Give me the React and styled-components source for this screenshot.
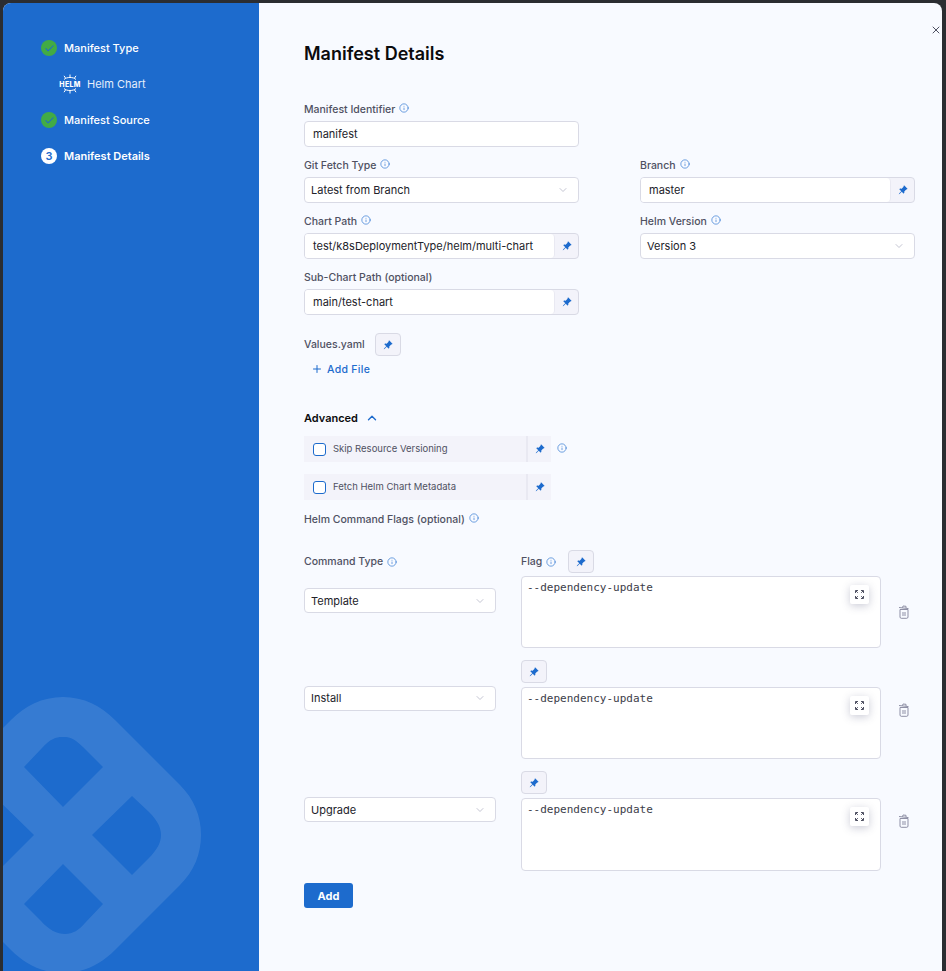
import React from "react";
import styled, { createGlobalStyle } from "styled-components";
import { BsPinAngleFill } from "react-icons/bs";
import { ChevronDown, ChevronUp, Info, Plus, X, Check } from "lucide-react";

const Global = createGlobalStyle`
  html, body { margin: 0; padding: 0; background: #2b2d31; }
  body { font-family: Inter, "Noto Sans", sans-serif; }
  * { box-sizing: border-box; }
`;
const Page = styled.div`
  width: 946px; height: 971px; padding: 3px 4px 0 3px; overflow: hidden;
`;
const Modal = styled.div`
  display: flex; height: 968px; background: #f8faff; border-radius: 8px 8px 0 0; overflow: hidden;
`;
const Sidebar = styled.aside`
  position: relative; width: 256px; flex: none; background: #1d6bcd; padding: 36px 0 0 38px; overflow: hidden;
`;
const Step = styled.div`
  display: flex; align-items: center; gap: 7px; height: 18px; margin-bottom: 18px;
  color: #fff; font-size: 11px; font-weight: ${p => p.$bold ? 600 : 500};
`;
const SubStep = styled(Step)`
  padding-left: 18px; gap: 6px; color: #e6eefb; font-weight: 400;
`;
const Done = styled.span`
  width: 16px; height: 16px; border-radius: 50%; background: #42ab45; color: #1d6bcd;
  display: flex; align-items: center; justify-content: center;
`;
const Num = styled(Done)`
  background: #fff; color: #1d6bcd; font-size: 11px; font-weight: 600;
`;
const Watermark = styled.svg`
  position: absolute; left: -3px; top: 667px; width: 259px; height: 301px;
`;
const Main = styled.main`
  position: relative; flex: 1; padding: 39px 27px 0 45px;
`;
const Close = styled.button`
  position: absolute; top: 21px; right: 25px; padding: 0; border: 0; background: none; color: #4f5162; display: flex;
`;
const Title = styled.h1`
  margin: 0 0 36px; font-size: 18px; line-height: 24px; font-weight: 600; color: #0b0b0d;
`;
const TwoCols = styled.div`
  display: grid; grid-template-columns: 275px 275px; column-gap: 61px;
`;
const Col = styled.div`display: flex; flex-direction: column;`;
const Field = styled.div`
  display: flex; flex-direction: column; margin-bottom: ${p => p.$mb ?? 11}px;
`;
const Label = styled.label`
  display: flex; align-items: center; gap: 4px; height: 14px; margin-bottom: 5px;
  font-size: 10.5px; font-weight: 500; color: #4f5162;
  svg { color: #1d6bcd; position: relative; top: -1px; }
`;
const Control = styled.div`
  display: flex; align-items: center; height: 26px; background: #fff; border: 1px solid #d9dae5; border-radius: 4px;
  padding: 0 ${p => p.$select ? 9 : 8}px 0 ${p => p.$select ? 6 : 8}px; justify-content: space-between;
  font-size: 11px; color: #22222a; overflow: hidden;
  svg { color: #b0b1c3; }
`;
const Split = styled(Control)`
  padding: 0 0 0 8px; background: #f3f3fa;
`;
const SplitValue = styled.span`
  flex: 1; align-self: stretch; display: flex; align-items: center; background: #fff; margin-left: -8px; padding-left: 8px;
  border-right: 1px solid #e9e9f2; border-radius: 0 4px 4px 0;
`;
const PinSlot = styled.span`
  width: 23px; flex: none; display: flex; align-items: center; justify-content: center; color: #1d6bcd;
  svg { color: #1d6bcd; }
`;
const PinButton = styled.button`
  width: 26px; height: 23px; padding: 0; border: 1px solid #d9dae5; border-radius: 4px; background: #f3f3fa;
  display: flex; align-items: center; justify-content: center; color: #1d6bcd; flex: none;
`;
const ValuesRow = styled.div`
  display: flex; align-items: center; gap: 10px; font-size: 10.5px; font-weight: 500; color: #4f5162; margin-top: 7px;
`;
const AddFile = styled.div`
  display: flex; align-items: center; gap: 4px; margin: 6px 0 0 7px; height: 14px;
  font-size: 10.5px; font-weight: 500; color: #1d6bcd; letter-spacing: .3px;
`;
const Advanced = styled.div`
  display: flex; align-items: center; gap: 7px; margin: 34px 0 10px; height: 16px;
  font-size: 11px; font-weight: 600; color: #0b0b0d; svg { color: #1d6bcd; }
`;
const CheckLine = styled.div`
  display: flex; align-items: center; gap: 6px; margin-bottom: 12px;
`;
const CheckRow = styled.div`
  display: flex; align-items: center; width: 247px; height: 26px; background: #f3f3fa;
`;
const CheckMain = styled.div`
  flex: 1; align-self: stretch; display: flex; align-items: center; gap: 7px; padding: 0 0 2px 9px;
  font-size: 9.5px; color: #4f5162; border-right: 2px solid #e9e9f2;
`;
const Box = styled.span`
  width: 13px; height: 13px; border: 1px solid #1d6bcd; border-radius: 3px; background: #fff; flex: none; margin-top: 2px;
`;
const HelmLabel = styled(Label)`
  margin: 3px 0 24px; gap: 4px;
`;
const FlagHead = styled.div`
  display: grid; grid-template-columns: 192px 360px; column-gap: 25px; align-items: center;
`;
const FlagHeadCell = styled.div`
  display: flex; align-items: center; gap: 4px; font-size: 10.5px; font-weight: 500; color: #4f5162; height: 23px;
  svg { color: #1d6bcd; }
`;
const FlagRow = styled.div`
  display: grid; grid-template-columns: 192px 360px 34px; column-gap: 25px; margin-top: ${p => p.$first ? 3 : 12}px;
`;
const CmdSelect = styled(Control)`
  height: 25px; align-self: center; margin-top: ${p => p.$offset}px;
`;
const FlagCol = styled.div`display: flex; flex-direction: column;`;
const FlagPin = styled(PinButton)`margin-bottom: 4px;`;
const TextBox = styled.div`
  position: relative; height: ${p => p.$h}px; background: #fff; border: 1px solid #d9dae5; border-radius: 4px;
  padding: 4px 5px; font-family: "DejaVu Sans Mono", "Liberation Mono", monospace; font-size: 11px; line-height: 14px; color: #3c3d49;
`;
const Expand = styled.span`
  position: absolute; top: 8px; right: 11px; width: 19px; height: 19px; border-radius: 2px; background: #fff;
  box-shadow: 0 2px 8px rgba(70,72,110,.28); display: flex; align-items: center; justify-content: center; color: #4f5162;
`;
const Trash = styled.svg`
  align-self: center; margin-left: -8px; margin-top: ${p => p.$offset}px; color: #8f90a6;
`;
const AddButton = styled.button`
  margin-top: 12px; width: 49px; height: 25px; border: 0; border-radius: 3px; background: #1d6bcd; color: #fff;
  font: 700 11px Inter, sans-serif;
`;

const I = () => <Info size={10} strokeWidth={1.5} />;
const Pin = () => <BsPinAngleFill size={10} />;
const TrashIcon = ({ offset }) => (
  <Trash $offset={offset} width="12" height="14" viewBox="0 0 12 14" fill="none" stroke="currentColor" strokeWidth="1">
    <path d="M1 2.5 L10.5 3.6 M4.5 2.8 L5 1 L8 1.3 L8 3" />
    <path d="M2 4.5 V12 C2 12.8 2.5 13.3 3.2 13.3 H8.8 C9.5 13.3 10 12.8 10 12 V4.5 Z" />
    <path d="M5 7 V11 M7 7 V11" />
  </Trash>
);
const ExpandIcon = () => (
  <svg width="9" height="9" viewBox="0 0 9 9" fill="none" stroke="currentColor" strokeWidth="1">
    <path d="M.5 3V.5H3M6 .5h2.5V3M8.5 6v2.5H6M3 8.5H.5V6M.8.8l2 2M8.2.8l-2 2M8.2 8.2l-2-2M.8 8.2l2-2" />
  </svg>
);
const HelmIcon = () => (
  <svg width="22" height="20" viewBox="0 0 22 20" fill="none">
    <g stroke="#fff" strokeWidth="1">
      <path d="M5 5.5C7.5 2.8 14.5 2.8 17 5.5M5 14.5C7.5 17.2 14.5 17.2 17 14.5" />
      <path d="M11 3V.5M6.5 4L5 1.8M15.5 4L17 1.8M11 17v2.5M6.5 16L5 18.2M15.5 16L17 18.2" />
    </g>
    <text x="11" y="12.6" textAnchor="middle" fill="#fff" fontFamily="Inter, sans-serif" fontSize="7" fontWeight="800" letterSpacing=".3">HELM</text>
  </svg>
);
const Select = ({ children, as: C = Control, ...rest }) => (
  <C $select {...rest}>{children}<ChevronDown size={12} strokeWidth={1.5} /></C>
);
const Pinned = ({ children }) => (
  <Split><SplitValue>{children}</SplitValue><PinSlot><Pin /></PinSlot></Split>
);

const flags = [
  { name: "Template", h: 72, sel: -23, tr: 0 },
  { name: "Install", h: 72, sel: -23, tr: 0 },
  { name: "Upgrade", h: 73, sel: -23, tr: 0 },
];

export default function App() {
  return (
    <Page>
      <Global />
      <Modal>
        <Sidebar>
          <Step><Done><Check size={11} strokeWidth={2.2} /></Done>Manifest Type</Step>
          <SubStep><HelmIcon />Helm Chart</SubStep>
          <Step><Done><Check size={11} strokeWidth={2.2} /></Done>Manifest Source</Step>
          <Step $bold><Num>3</Num>Manifest Details</Step>
          <Watermark viewBox="0 0 259 301">
            <path fillRule="evenodd" fill="#fff" fillOpacity=".115" d="M63 27
              C84 27 101 36 115 50 L180 115 C194 129 201 146 201 165 C201 184 194 201 180 215 L115 280 C101 294 84 303 63 303
              C42 303 25 294 11 280 L-54 215 C-68 201 -75 184 -75 165 C-75 146 -68 129 -54 115 L11 50 C25 36 42 27 63 27 Z
              M24 97 L63 137 L103 97 L83 77 C72 66 67 67 62 67 C56 67 50 69 42 78 Z
              M132 126 L92 165 L132 205 L148 189 C158 179 161 172 161 165 C161 158 158 151 149 142 Z
              M63 194 L24 234 L41 251 C49 260 57 264 65 264 C73 264 79 260 85 253 L103 234 Z
              M-6 126 L34 165 L-6 205 Z" />
          </Watermark>
        </Sidebar>
        <Main>
          <Close><X size={12} strokeWidth={2} /></Close>
          <Title>Manifest Details</Title>
          <Field>
            <Label>Manifest Identifier <I /></Label>
            <TwoCols><Control>manifest</Control></TwoCols>
          </Field>
          <TwoCols>
            <Col>
              <Field><Label>Git Fetch Type <I /></Label><Select>Latest from Branch</Select></Field>
              <Field><Label>Chart Path <I /></Label><Pinned>test/k8sDeploymentType/helm/multi-chart</Pinned></Field>
              <Field $mb={0}><Label>Sub-Chart Path (optional)</Label><Pinned>main/test-chart</Pinned></Field>
            </Col>
            <Col>
              <Field><Label>Branch <I /></Label><Pinned>master</Pinned></Field>
              <Field><Label>Helm Version <I /></Label><Select>Version 3</Select></Field>
            </Col>
          </TwoCols>
          <ValuesRow style={{ marginTop: 18 }}>Values.yaml <PinButton><Pin /></PinButton></ValuesRow>
          <AddFile><Plus size={12} strokeWidth={2} />Add File</AddFile>
          <Advanced>Advanced <ChevronUp size={14} strokeWidth={2.4} /></Advanced>
          <CheckLine>
            <CheckRow><CheckMain><Box />Skip Resource Versioning</CheckMain><PinSlot><Pin /></PinSlot></CheckRow>
            <Label as="span" style={{ margin: 0 }}><I /></Label>
          </CheckLine>
          <CheckLine>
            <CheckRow><CheckMain><Box />Fetch Helm Chart Metadata</CheckMain><PinSlot><Pin /></PinSlot></CheckRow>
          </CheckLine>
          <HelmLabel>Helm Command Flags (optional) <I /></HelmLabel>
          <FlagHead>
            <FlagHeadCell>Command Type <I /></FlagHeadCell>
            <FlagHeadCell>Flag <I /><PinButton style={{ marginLeft: 8 }}><Pin /></PinButton></FlagHeadCell>
          </FlagHead>
          {flags.map((f, i) => (
            <FlagRow key={f.name} $first={i === 0}>
              <Select as={CmdSelect} $offset={f.sel}>{f.name}</Select>
              <FlagCol>
                {i > 0 && <FlagPin><Pin /></FlagPin>}
                <TextBox $h={f.h}>--dependency-update<Expand><ExpandIcon /></Expand></TextBox>
              </FlagCol>
              <TrashIcon offset={f.tr} />
            </FlagRow>
          ))}
          <AddButton>Add</AddButton>
        </Main>
      </Modal>
    </Page>
  );
}
